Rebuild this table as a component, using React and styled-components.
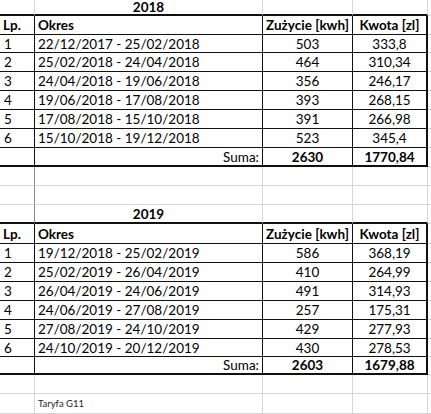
import React from 'react'
import styled, { createGlobalStyle } from 'styled-components'

const GlobalStyle = createGlobalStyle`
    body {
        margin: 0;
        background: #ffffff;
        font-family: Lato, "Open Sans", sans-serif;
        color: #000000;
    }
`

// border looks used by cells
const lines = {
    none: 'none',
    grid: '1px solid #d6d6d6',
    dim: '1px solid #8c8c8c',
    line: '1px solid #111111',
    thick: '2px solid #111111',
}

const data = [
    {
        year: '2018',
        rows: [
            ['1', '22/12/2017 - 25/02/2018', '503', '333,8'],
            ['2', '25/02/2018 - 24/04/2018', '464', '310,34'],
            ['3', '24/04/2018 - 19/06/2018', '356', '246,17'],
            ['4', '19/06/2018 - 17/08/2018', '393', '268,15'],
            ['5', '17/08/2018 - 15/10/2018', '391', '266,98'],
            ['6', '15/10/2018 - 19/12/2018', '523', '345,4'],
        ],
        heights: [18, 19, 19, 19, 19, 19],
        sum: ['2630', '1770,84'],
        sumHeight: 19,
    },
    {
        year: '2019',
        rows: [
            ['1', '19/12/2018 - 25/02/2019', '586', '368,19'],
            ['2', '25/02/2019 - 26/04/2019', '410', '264,99'],
            ['3', '26/04/2019 - 24/06/2019', '491', '314,93'],
            ['4', '24/06/2019 - 27/08/2019', '257', '175,31'],
            ['5', '27/08/2019 - 24/10/2019', '429', '277,93'],
            ['6', '24/10/2019 - 20/12/2019', '430', '278,53'],
        ],
        heights: [19, 19, 19, 19, 19, 18],
        sum: ['2603', '1679,88'],
        sumHeight: 18,
    },
]

function BlankRow({ left = 'grid', h }) {
    return (
        <Row $h={h}>
            <Cell $right={left} />
            <Cell />
            <Cell />
            <Cell />
            <Cell $right="none" />
        </Row>
    )
}

function App() {
    return (
        <>
            <GlobalStyle />
            <Sheet>
                {data.map((table, t) => (
                    <React.Fragment key={table.year}>
                        {t > 0 && (
                            <>
                                <BlankRow left="dim" />
                                <BlankRow left="dim" />
                            </>
                        )}
                        <Row $h={t === 0 ? 16 : 19}>
                            <Cell $right={t === 0 ? 'grid' : 'dim'} $bottom="thick" />
                            <Cell $bottom="thick" $align="center" $bold $lift>
                                {table.year}
                            </Cell>
                            <Cell $bottom="thick" />
                            <Cell $bottom="thick" />
                            <Cell $right="none" />
                        </Row>

                        <Row $h={t === 0 ? 19 : 20}>
                            <Cell $right="line" $bottom="line" $bold $pad="3px">Lp.</Cell>
                            <Cell $right="line" $bottom="line" $bold $pad="3px">Okres</Cell>
                            <Cell $right="line" $bottom="line" $bold $align="center">Zużycie [kwh]</Cell>
                            <Cell $right="thick" $bottom="line" $bold $align="center">Kwota [zl]</Cell>
                            <Cell $right="none" />
                        </Row>

                        {table.rows.map((r, i) => (
                            <Row key={r[0]} $h={table.heights[i]}>
                                <Cell $right="line" $bottom="line" $pad="4px">{r[0]}</Cell>
                                <Cell $right="line" $bottom="line" $pad="3px">{r[1]}</Cell>
                                <Cell $right="line" $bottom="line" $align="center">{r[2]}</Cell>
                                <Cell $right="thick" $bottom="line" $align="center">{r[3]}</Cell>
                                <Cell $right="none" />
                            </Row>
                        ))}

                        <Row $h={table.sumHeight}>
                            <Cell $right="line" $bottom="thick" />
                            <Cell $right="line" $bottom="thick" $align="flex-end" $pad="3px">Suma:</Cell>
                            <Cell $right="line" $bottom="thick" $align="center" $bold>{table.sum[0]}</Cell>
                            <Cell $right="thick" $bottom="thick" $align="center" $bold>{table.sum[1]}</Cell>
                            <Cell $right="none" />
                        </Row>
                    </React.Fragment>
                ))}

                <BlankRow />
                <Row $h={20}>
                    <Cell />
                    <Cell $pad="3px">
                        <Note>Taryfa G11</Note>
                    </Cell>
                    <Cell />
                    <Cell />
                    <Cell $right="none" />
                </Row>
            </Sheet>
        </>
    )
}

const Sheet = styled.div`
    width: 431px;
    height: 414px;
    overflow: hidden;
    display: flex;
    flex-direction: column;
`

const Row = styled.div`
    display: grid;
    grid-template-columns: 35px 228px 90px 75px 1fr;
    height: ${(p) => p.$h || 19}px;
    flex-shrink: 0;
`

const Cell = styled.div`
    box-sizing: border-box;
    display: flex;
    align-items: center;
    justify-content: ${(p) => p.$align || 'flex-start'};
    padding: ${(p) => (p.$align === 'flex-end' ? `0 ${p.$pad || '0'} 0 0` : `0 0 0 ${p.$pad || '0'}`)};
    border-right: ${(p) => lines[p.$right || 'grid']};
    border-bottom: ${(p) => lines[p.$bottom || 'grid']};
    font-size: 13.5px;
    line-height: 14px;
    font-weight: ${(p) => (p.$bold ? 700 : 400)};
    white-space: nowrap;

    & > span {
        line-height: 12px;
    }
`

const Note = styled.span`
    font-size: 9.5px;
    color: #222222;
`

export default App
